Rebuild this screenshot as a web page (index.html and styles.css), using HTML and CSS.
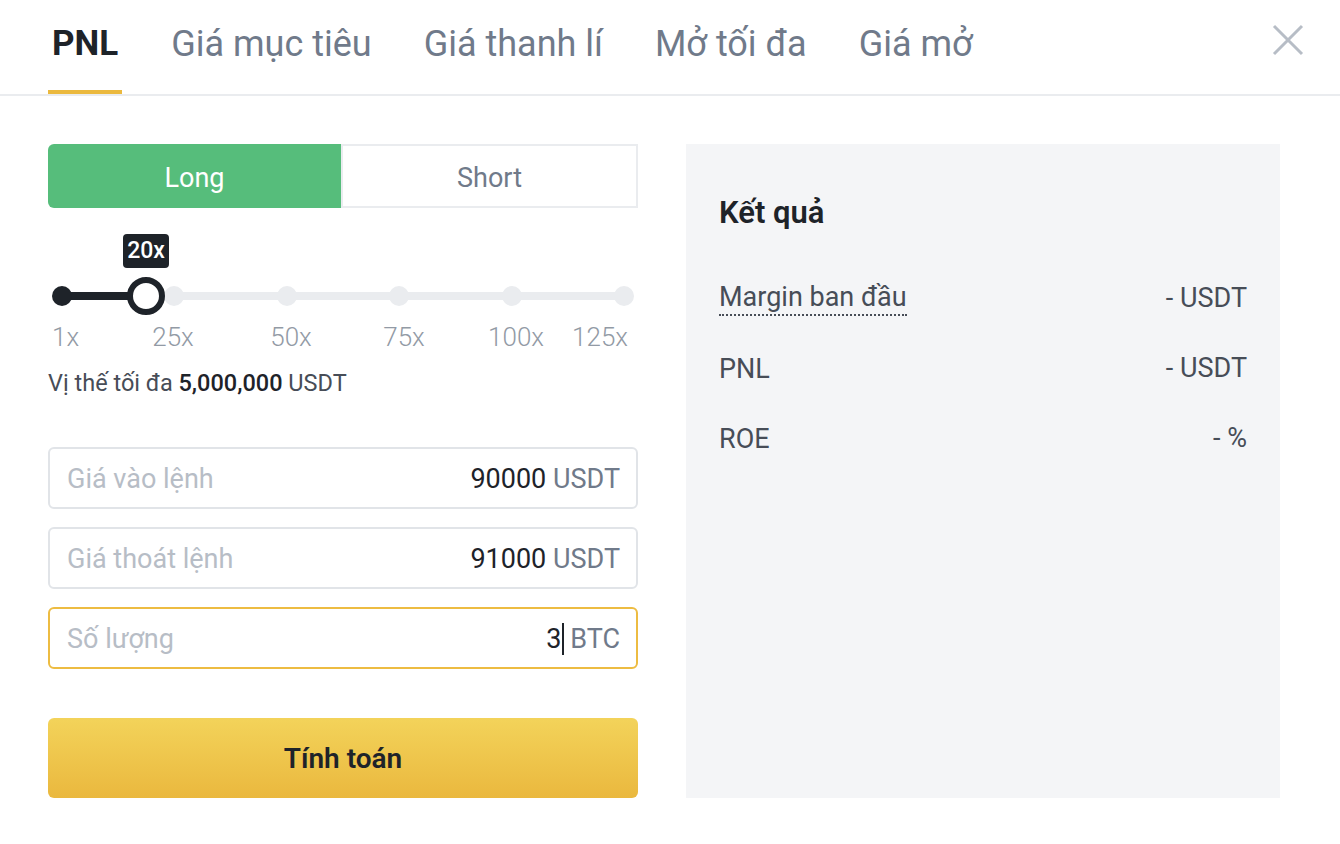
FILE: index.html
```html
<!DOCTYPE html>
<html lang="vi">
<head>
<meta charset="utf-8">
<title>Máy tính</title>
<link rel="stylesheet" href="styles.css">
</head>
<body>
<div class="modal">
  <div class="header">
    <nav class="tabs">
      <div class="tab active">PNL</div>
      <div class="tab">Giá mục tiêu</div>
      <div class="tab">Giá thanh lí</div>
      <div class="tab">Mở tối đa</div>
      <div class="tab">Giá mở</div>
    </nav>
    <button class="close" aria-label="Đóng">
      <svg width="32" height="32" viewBox="0 0 32 32"><path d="M2 2 L30 30 M30 2 L2 30" stroke="#B7BDC6" stroke-width="3" fill="none"/></svg>
    </button>
  </div>
  <div class="content">
    <div class="left">
      <div class="side-toggle">
        <div class="side long">Long</div>
        <div class="side short">Short</div>
      </div>
      <div class="slider">
        <div class="tooltip">20x</div>
        <div class="track">
          <div class="track-active"></div>
          <span class="dot on" style="left:0%"></span>
          <span class="dot" style="left:20%"></span>
          <span class="dot" style="left:40%"></span>
          <span class="dot" style="left:60%"></span>
          <span class="dot" style="left:80%"></span>
          <span class="dot" style="left:100%"></span>
          <span class="thumb"></span>
        </div>
        <div class="marks">
          <span class="mark first">1x</span>
          <span class="mark" style="left:125px">25x</span>
          <span class="mark" style="left:243px">50x</span>
          <span class="mark" style="left:356px">75x</span>
          <span class="mark" style="left:468px">100x</span>
          <span class="mark last">125x</span>
        </div>
      </div>
      <div class="max-pos">Vị thế tối đa <b>5,000,000</b> USDT</div>
      <div class="fields">
        <div class="field">
          <span class="placeholder">Giá vào lệnh</span>
          <span class="value">90000 <span class="unit">USDT</span></span>
        </div>
        <div class="field">
          <span class="placeholder">Giá thoát lệnh</span>
          <span class="value">91000 <span class="unit">USDT</span></span>
        </div>
        <div class="field focus">
          <span class="placeholder">Số lượng</span>
          <span class="value"><span class="caret">3</span> <span class="unit">BTC</span></span>
        </div>
      </div>
      <button class="calc">Tính toán</button>
    </div>
    <div class="result">
      <h2 class="result-title">Kết quả</h2>
      <div class="row first-row"><span class="lbl dotted">Margin ban đầu</span><span class="val">- USDT</span></div>
      <div class="row"><span class="lbl">PNL</span><span class="val">- USDT</span></div>
      <div class="row"><span class="lbl">ROE</span><span class="val">- %</span></div>
    </div>
  </div>
</div>
</body>
</html>
```

FILE: styles.css
```css
* { box-sizing: border-box; }
html, body { margin: 0; padding: 0; background: #fff; }
body {
  font-family: Roboto, "Noto Sans", "Liberation Sans", sans-serif;
  color: #1E2329;
  width: 1340px;
  height: 844px;
  overflow: hidden;
}
.header {
  height: 96px;
  border-bottom: 2px solid #EAECEF;
  display: flex;
  align-items: flex-start;
  justify-content: space-between;
  padding: 0 36px 0 48px;
}
.tabs {
  display: flex;
  gap: 46px;
  height: 94px;
}
.tab {
  font-size: 36px;
  line-height: 40px;
  padding: 24px 3px 0;
  color: #707A8A;
  height: 94px;
  border-bottom: 4px solid transparent;
  white-space: nowrap;
}
.tab.active {
  color: #1E2329;
  font-weight: 700;
  border-bottom-color: #EBB93E;
  padding: 24px 4px 0;
  font-size: 35px;
}
.close {
  margin-top: 24px;
  width: 32px;
  height: 32px;
  padding: 0;
  border: 0;
  background: none;
}
.close svg { display: block; }
.content {
  display: flex;
  gap: 48px;
  padding: 48px 60px 0 48px;
}
.left {
  width: 590px;
  flex: none;
  display: flex;
  flex-direction: column;
}
.side-toggle {
  display: flex;
  height: 64px;
}
.side {
  flex: 1;
  display: flex;
  align-items: center;
  justify-content: center;
  font-size: 27px;
  padding-top: 4px;
}
.side.long {
  background: #56BD7B;
  color: #fff;
  border-radius: 6px 0 0 6px;
}
.side.short {
  border: 2px solid #EAECEF;
  color: #707A8A;
}
.slider {
  position: relative;
  height: 120px;
  margin-top: 26px;
}
.tooltip {
  position: absolute;
  left: 75px;
  top: 0;
  width: 46px;
  height: 34px;
  background: #1E2329;
  color: #fff;
  border-radius: 4px;
  font-size: 23px;
  font-weight: 500;
  line-height: 34px;
  text-align: center;
}
.track {
  position: absolute;
  left: 14px;
  right: 14px;
  top: 58px;
  height: 8px;
  background: #EAECEF;
  border-radius: 4px;
}
.track-active {
  position: absolute;
  left: 0;
  top: 0;
  height: 8px;
  width: 84px;
  background: #1E2329;
}
.dot {
  position: absolute;
  top: 4px;
  width: 20px;
  height: 20px;
  margin: -10px 0 0 -10px;
  border-radius: 50%;
  background: #EAECEF;
}
.dot.on { background: #1E2329; }
.thumb {
  position: absolute;
  left: 84px;
  top: 4px;
  width: 38px;
  height: 38px;
  margin: -19px 0 0 -19px;
  border-radius: 50%;
  background: #fff;
  border: 6px solid #1E2329;
}
.marks {
  position: absolute;
  left: 0;
  right: 0;
  top: 89px;
  height: 28px;
  font-size: 26px;
  font-weight: 300;
  line-height: 28px;
  color: #929AA5;
}
.mark {
  position: absolute;
  top: 0;
  transform: translateX(-50%);
  white-space: nowrap;
}
.mark.first { left: 4px; transform: none; }
.mark.last { right: 10px; transform: none; }
.max-pos {
  margin-top: 14px;
  font-size: 23.5px;
  line-height: 30px;
  color: #474D57;
}
.max-pos b {
  font-weight: 500;
  color: #1E2329;
}
.fields {
  margin-top: 49px;
  display: flex;
  flex-direction: column;
  gap: 18px;
}
.field {
  height: 62px;
  border: 2px solid #E1E4E8;
  border-radius: 6px;
  display: flex;
  align-items: center;
  justify-content: space-between;
  padding: 2px 16px 0 17px;
  font-size: 27px;
}
.field.focus { border-color: #EDBC42; }
.placeholder { color: #B7BDC6; }
.value { color: #1E2329; }
.unit { color: #707A8A; }
.caret {
  border-right: 2px solid #1E2329;
  display: inline-block;
  line-height: 32px;
}
.calc {
  margin-top: 49px;
  height: 80px;
  border: 0;
  border-radius: 6px;
  background: linear-gradient(180deg, #F3D35A 0%, #EAB83E 100%);
  font-family: inherit;
  font-size: 28px;
  font-weight: 600;
  color: #1E2329;
  padding-top: 2px;
}
.result {
  flex: 1;
  background: #F4F5F7;
  height: 654px;
  padding: 51px 33px 0 33px;
}
.result-title {
  margin: 0;
  font-size: 31px;
  line-height: 36px;
  font-weight: 600;
  color: #1E2329;
}
.row {
  display: flex;
  justify-content: space-between;
  align-items: flex-end;
  height: 36px;
  margin-top: 34px;
  font-size: 27px;
  color: #474D57;
}
.row.first-row { margin-top: 49px; }
.lbl { line-height: 34px; }
.lbl.dotted {
  display: inline-block;
  border-bottom: 2px dotted #474D57;
}
.val { line-height: 36px; }
```
